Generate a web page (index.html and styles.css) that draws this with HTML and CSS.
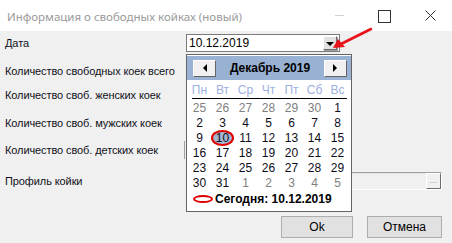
FILE: index.html
```html
<!DOCTYPE html>
<html lang="ru">
<head>
<meta charset="utf-8">
<title>Информация о свободных койках</title>
<link rel="stylesheet" href="styles.css">
</head>
<body>
<div class="window">
  <div class="titlebar">
    <span class="title">Информация о свободных койках (новый)</span>
    <div class="controls">
      <span class="ctl ctl-min"></span>
      <span class="ctl ctl-max"></span>
      <span class="ctl ctl-close">
        <svg width="11" height="11" viewBox="0 0 11 11"><path d="M0.5 0.5L10.5 10.5M10.5 0.5L0.5 10.5" stroke="#333" stroke-width="1"/></svg>
      </span>
    </div>
  </div>
  <div class="body">
    <div class="form">
      <div class="row r1">
        <span class="label">Дата</span>
        <div class="combo">
          <span class="combo-text">10.12.2019</span>
          <span class="combo-btn"><span class="tri-down"></span></span>
        </div>
      </div>
      <div class="row r2"><span class="label">Количество свободных коек всего</span></div>
      <div class="row r3"><span class="label">Количество своб. женских коек</span></div>
      <div class="row r4"><span class="label">Количество своб. мужских коек</span></div>
      <div class="row r5"><span class="label">Количество своб. детских коек</span><div class="numfield"></div></div>
      <div class="row r6">
        <span class="label">Профиль койки</span>
        <div class="lookup"><span class="lookup-btn">...</span></div>
      </div>
    </div>
    <div class="buttons">
      <button class="btn btn-ok">Ok</button>
      <button class="btn btn-cancel">Отмена</button>
    </div>
  </div>

  <div class="calendar">
    <div class="cal-head">
      <span class="nav"><span class="tri-left"></span></span>
      <span class="month">Декабрь 2019</span>
      <span class="nav"><span class="tri-right"></span></span>
    </div>
    <div class="dow">
      <span>Пн</span><span>Вт</span><span>Ср</span><span>Чт</span><span>Пт</span><span>Сб</span><span>Вс</span>
    </div>
    <div class="days">
      <span class="other">25</span><span class="other">26</span><span class="other">27</span><span class="other">28</span><span class="other">29</span><span class="other">30</span><span>1</span>
      <span>2</span><span>3</span><span>4</span><span>5</span><span>6</span><span>7</span><span>8</span>
      <span>9</span><span class="today"><span class="sel">10</span></span><span>11</span><span>12</span><span>13</span><span>14</span><span>15</span>
      <span>16</span><span>17</span><span>18</span><span>19</span><span>20</span><span>21</span><span>22</span>
      <span>23</span><span>24</span><span>25</span><span>26</span><span>27</span><span>28</span><span>29</span>
      <span>30</span><span>31</span><span class="other">1</span><span class="other">2</span><span class="other">3</span><span class="other">4</span><span class="other">5</span>
    </div>
    <div class="today-row">
      <span class="today-mark"></span>
      <span class="today-text">Сегодня: 10.12.2019</span>
    </div>
  </div>

  <svg class="arrow" width="452" height="243" viewBox="0 0 452 243">
    <path d="M371 29 L341 44" stroke="#e8111a" stroke-width="2.6" stroke-linecap="round" fill="none"/>
    <path d="M333 48 L338 39 L345 47 Z" fill="#e8111a"/>
  </svg>
</div>
</body>
</html>
```

FILE: styles.css
```css
* { box-sizing: border-box; }
html, body { margin: 0; padding: 0; }
body {
  width: 452px;
  height: 243px;
  overflow: hidden;
  background: #f0f0f0;
  font-family: "Liberation Sans", Arial, sans-serif;
  font-size: 11px;
  color: #000;
}
.window {
  position: relative;
  width: 452px;
  height: 243px;
  overflow: hidden;
  display: flex;
  flex-direction: column;
}
.titlebar {
  height: 31px;
  background: #fff;
  display: flex;
  align-items: center;
  padding-left: 7px;
}
.title {
  font-family: "Noto Sans", "Open Sans", sans-serif;
  font-size: 11.5px;
  color: #9a9a9a;
  flex: 1;
  margin-top: 1px;
}
.controls {
  display: flex;
  align-items: center;
  height: 31px;
}
.ctl {
  position: relative;
  display: block;
  width: 46px;
  height: 31px;
}
.ctl-min::after {
  content: "";
  position: absolute;
  left: 15px;
  top: 15px;
  width: 9px;
  height: 1px;
  background: #d0d0d0;
}
.ctl-max::after {
  content: "";
  position: absolute;
  left: 12px;
  top: 10px;
  width: 11px;
  height: 11px;
  border: 1px solid #333;
}
.ctl-close svg {
  position: absolute;
  left: 13px;
  top: 10px;
}
.ctl-close { width: 40px; }

.body {
  flex: 1;
  display: flex;
  flex-direction: column;
  padding: 3px 10px 0 5px;
}
.form { display: flex; flex-direction: column; }
.row {
  position: relative;
  display: flex;
  align-items: center;
  height: 18px;
}
.r2 { margin-top: 10px; }
.r3 { margin-top: 6px; }
.r4 { margin-top: 10px; }
.r5 { margin-top: 9px; }
.r6 { margin-top: 13px; }
.label { width: 181px; color: #101020; letter-spacing: -0.1px; }

.combo {
  width: 154px;
  height: 18px;
  background: #fff;
  border: 1px solid #7a7a7a;
  display: flex;
  align-items: center;
  justify-content: space-between;
  padding: 0 1px 0 2px;
  font-size: 12px;
}
.combo-btn {
  width: 14px;
  height: 14px;
  background: #e1e1e1;
  border: 1px solid;
  border-color: #fff #6d6d6d #6d6d6d #fff;
  box-shadow: 1px 1px 0 #a0a0a0;
  display: flex;
  align-items: center;
  justify-content: center;
  margin-right: 1px;
}
.tri-down {
  width: 0; height: 0;
  border-left: 4px solid transparent;
  border-right: 4px solid transparent;
  border-top: 4px solid #000;
  margin-top: 2px;
}
.numfield {
  width: 40px;
  height: 18px;
  border-left: 1px solid #a0a0a0;
  margin-left: -2px;
}
.lookup {
  flex: 1;
  height: 18px;
  border: 1px solid;
  border-color: #a0a0a0 #fff #fff #a0a0a0;
  box-shadow: inset 1px 1px 0 #e3e3e3;
  background: #f0f0f0;
  display: flex;
  justify-content: flex-end;
  align-items: center;
}
.lookup-btn {
  width: 15px;
  height: 16px;
  border: 1px solid;
  border-color: #fff #6d6d6d #6d6d6d #fff;
  color: #a0a0a0;
  font-size: 9px;
  line-height: 12px;
  text-align: center;
}

.buttons {
  display: flex;
  justify-content: flex-end;
  gap: 14px;
  margin-top: 26px;
}
.btn {
  height: 22px;
  background: #e1e1e1;
  border: 1px solid #adadad;
  font-family: "Liberation Sans", Arial, sans-serif;
  font-size: 12px;
  color: #000;
  padding: 0;
}
.btn-ok { width: 72px; }
.btn-cancel { width: 75px; }

.calendar {
  position: absolute;
  left: 186px;
  top: 54px;
  width: 166px;
  height: 158px;
  background: #fff;
  border: 1px solid #646464;
  padding-top: 1px;
  display: flex;
  flex-direction: column;
}
.cal-head {
  height: 24px;
  background: #99b1d2;
  display: flex;
  align-items: center;
  justify-content: space-between;
  padding: 0 4px 0 6px;
}
.nav {
  width: 23px;
  height: 17px;
  background: #f0f0f0;
  border: 1px solid;
  border-color: #fff #646464 #646464 #fff;
  display: flex;
  align-items: center;
  justify-content: center;
}
.tri-left {
  width: 0; height: 0;
  border-top: 4px solid transparent;
  border-bottom: 4px solid transparent;
  border-right: 4px solid #000;
}
.tri-right {
  width: 0; height: 0;
  border-top: 4px solid transparent;
  border-bottom: 4px solid transparent;
  border-left: 4px solid #000;
}
.month {
  font-weight: bold;
  font-size: 12px;
  color: #000;
}
.dow {
  position: relative;
  height: 19px;
  margin-left: 1px;
  display: grid;
  grid-template-columns: repeat(7, 23px);
  align-items: center;
  color: #9cb0e0;
  font-size: 12px;
}
.dow::after {
  content: "";
  position: absolute;
  left: 4px;
  right: 4px;
  bottom: 0;
  height: 1px;
  background: #000;
}
.dow span { text-align: center; }
.days {
  display: grid;
  grid-template-columns: repeat(7, 23px);
  grid-auto-rows: 15px;
  margin-left: 1px;
  margin-top: 1px;
  font-size: 12px;
  color: #0d0d1a;
}
.days > span {
  display: flex;
  align-items: center;
  justify-content: center;
}
.days .other { color: #808080; }
.today { position: relative; }
.sel {
  display: block;
  width: 19px;
  height: 12px;
  line-height: 12px;
  text-align: center;
  background: #a4b6cf;
  box-shadow: 0 0 0 2px #e00000;
  border-radius: 50%;
}
.today-row {
  height: 17px;
  display: flex;
  align-items: center;
  padding-left: 6px;
  gap: 2px;
}
.today-mark {
  width: 20px;
  height: 8px;
  border: 2px solid #e00000;
  border-radius: 50%;
}
.today-text {
  font-weight: bold;
  font-size: 12px;
}
.arrow {
  position: absolute;
  left: 0;
  top: 0;
  pointer-events: none;
}
```
